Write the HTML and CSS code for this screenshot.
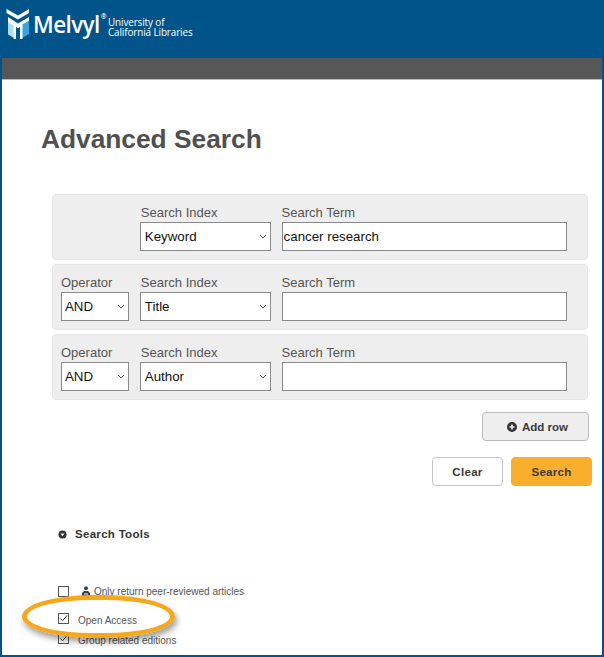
FILE: index.html
```html
<!DOCTYPE html>
<html lang="en">

<head>
    <meta charset="UTF-8">
    <title>Melvyl Advanced Search</title>
    <link rel="stylesheet" href="styles.css">
</head>

<body>
    <div class="page">
        <header class="top-bar">
            <svg class="logo-mark" viewBox="2 3 24 30" width="24" height="30">
                <path d="M2.500 3l11.500 6.500 11-6.500v4l-11 6.500-11.500-6.500z" fill="#fff"/>
                <path d="M4 12l8 4.500v16.500l-8-4.500z" fill="#a9def5"/>
                <path d="M16.500 16.500l8.500-5v16.500l-8.500 5z" fill="#35a7dc"/>
                <path d="M4 11l10 6.500 11-6.500v3.500l-6.500 4v14.500l-2.500 1v-13l-2 1.300-2-1.300v13l-2.500-1.500v-13l-5.500-3.500z" fill="#fff"/>
            </svg>
            <span class="logo-name">Melvyl<sup>®</sup></span>
            <span class="logo-sub">University of<br>California Libraries</span>
        </header>
        <div class="grey-bar"></div>

        <main class="content">
            <h1 class="title">Advanced Search</h1>

            <div class="rows">
                <div class="row">
                    <div class="field op-field"></div>
                    <div class="field index-field">
                        <label>Search Index</label>
                        <div class="select">Keyword<svg class="chev" viewBox="0 0 8 5" width="8" height="5"><path d="M1 1l3 3 3-3" /></svg></div>
                    </div>
                    <div class="field term-field">
                        <label>Search Term</label>
                        <div class="input">cancer research</div>
                    </div>
                </div>
                <div class="row">
                    <div class="field op-field">
                        <label>Operator</label>
                        <div class="select">AND<svg class="chev" viewBox="0 0 8 5" width="8" height="5"><path d="M1 1l3 3 3-3" /></svg></div>
                    </div>
                    <div class="field index-field">
                        <label>Search Index</label>
                        <div class="select">Title<svg class="chev" viewBox="0 0 8 5" width="8" height="5"><path d="M1 1l3 3 3-3" /></svg></div>
                    </div>
                    <div class="field term-field">
                        <label>Search Term</label>
                        <div class="input"></div>
                    </div>
                </div>
                <div class="row">
                    <div class="field op-field">
                        <label>Operator</label>
                        <div class="select">AND<svg class="chev" viewBox="0 0 8 5" width="8" height="5"><path d="M1 1l3 3 3-3" /></svg></div>
                    </div>
                    <div class="field index-field">
                        <label>Search Index</label>
                        <div class="select">Author<svg class="chev" viewBox="0 0 8 5" width="8" height="5"><path d="M1 1l3 3 3-3" /></svg></div>
                    </div>
                    <div class="field term-field">
                        <label>Search Term</label>
                        <div class="input"></div>
                    </div>
                </div>
            </div>

            <div class="add-line">
                <button class="btn add-btn">
                    <svg viewBox="0 0 12 12" width="10" height="10"><circle cx="6" cy="6" r="6" fill="#333"/><path d="M6 3v6M3 6h6" stroke="#eee" stroke-width="1.800"/></svg>
                    Add row
                </button>
            </div>
            <div class="action-line">
                <button class="btn clear-btn">Clear</button>
                <button class="btn search-btn">Search</button>
            </div>

            <div class="tools-head">
                <svg viewBox="0 0 10 10" width="9" height="9"><circle cx="5" cy="5" r="4.500" fill="#333"/><path d="M2.800 3.800h4.400L5 7z" fill="#fff"/></svg>
                Search Tools
            </div>

            <div class="checks">
                <div class="check">
                    <span class="box"></span>
                    <svg class="peer" viewBox="0 0 10 11" width="10" height="11"><circle cx="5" cy="2.200" r="2" fill="#444"/><path d="M1 11V7l2-2h4l2 2v4z" fill="#444"/><path d="M3 8h4" stroke="#fff" stroke-width="1"/></svg>
                    Only return peer-reviewed articles
                </div>
                <div class="check check-open">
                    <span class="box box-up"><svg viewBox="0 0 10 10" width="9" height="9"><path d="M1.500 5l2.500 2.500L9 1.500" fill="none" stroke="#333" stroke-width="1.100"/></svg></span>
                    <span>Open Access</span>
                </div>
                <div class="check check-group">
                    <span class="box box-up"><svg viewBox="0 0 10 10" width="9" height="9"><path d="M1.500 5l2.500 2.500L9 1.500" fill="none" stroke="#333" stroke-width="1.100"/></svg></span>
                    <span>Group related editions</span>
                </div>
            </div>
            <div class="highlight"></div>
        </main>
    </div>
</body>

</html>
```
FILE: styles.css
```css
html, body {
    margin: 0;
    height: 100%;
}

body {
    font-family: 'Liberation Sans', Arial, sans-serif;
    overflow: hidden;
    background: #fff;
}

.page {
    width: 604px;
    height: 657px;
    box-sizing: border-box;
    border: solid #00548a;
    border-width: 0 2px 2px 2px;
    overflow: hidden;
    position: relative;
}

.top-bar {
    height: 58px;
    margin: 0 -2px;
    background: #00548a;
    display: flex;
    align-items: flex-start;
    padding: 9px 0 0 6px;
    box-sizing: border-box;
    color: #fff;
}

.logo-mark {
    flex: none;
}

.logo-name {
    font-family: 'Open Sans', sans-serif;
    font-size: 22.500px;
    font-weight: 600;
    line-height: 30px;
    margin-left: 3px;
    margin-top: 1px;
    letter-spacing: -0.600px;
}

.logo-name sup {
    font-size: 7px;
    line-height: 0;
    vertical-align: 14px;
    margin-left: 1px;
}

.logo-sub {
    font-family: 'Open Sans', sans-serif;
    font-size: 9.900px;
    font-weight: 500;
    line-height: 10px;
    margin: 8px 0 0 2px;
    letter-spacing: -0.100px;
}

.grey-bar {
    height: 22px;
    background: #575757;
    border-bottom: 1px solid #bbb;
    box-sizing: border-box;
}

.content {
    padding: 44px 13px 0 39px;
}

.title {
    margin: 0 0 39px;
    font-size: 26.300px;
    line-height: 31px;
    font-weight: bold;
    color: #505050;
}

.rows {
    margin: 0 1px 0 11px;
    display: flex;
    flex-direction: column;
    gap: 4px;
}

.row {
    display: flex;
    gap: 11px;
    height: 66px;
    box-sizing: border-box;
    padding: 11px 20px 0 8px;
    background: #eee;
    border: 1px solid #e6e6e6;
    border-radius: 4px;
}

.field label {
    display: block;
    font-size: 13px;
    line-height: 14px;
    margin-bottom: 2px;
    color: #555;
}

.index-field label {
    margin-left: 1px;
}

.op-field {
    width: 68px;
}

.index-field {
    width: 131px;
}

.term-field {
    width: 286px;
}

.select, .input {
    height: 29px;
    box-sizing: border-box;
    border: 1px solid #8a8a8a;
    background: #fff;
    font-size: 13.300px;
    line-height: 27px;
    color: #111;
}

.select {
    padding: 0 3px;
    display: flex;
    align-items: center;
    justify-content: space-between;
}

.index-field .select {
    padding-left: 4px;
}

.input {
    padding-left: 1px;
}

.chev {
    fill: none;
    stroke: #555;
    stroke-width: 1;
}

.add-line {
    display: flex;
    justify-content: flex-end;
    margin-top: 12px;
}

.btn {
    font-family: 'Liberation Sans', Arial, sans-serif;
    font-size: 11.500px;
    font-weight: bold;
    letter-spacing: 0.300px;
    height: 29px;
    box-sizing: border-box;
    border-radius: 4px;
    color: #3a3a3a;
    padding: 0;
}

.add-btn {
    width: 107px;
    background: #eee;
    border: 1px solid #bbb;
    display: flex;
    align-items: center;
    justify-content: center;
    gap: 5px;
    padding-left: 4px;
    letter-spacing: 0;
}

.action-line {
    display: flex;
    justify-content: flex-end;
    gap: 8px;
    margin: 16px -3px 0 0;
}

.clear-btn {
    width: 71px;
    background: #fff;
    border: 1px solid #c4c4c4;
}

.search-btn {
    width: 81px;
    background: #f9ae2c;
    border: 1px solid #f9ae2c;
}

.tools-head {
    display: flex;
    align-items: center;
    gap: 8px;
    margin: 41px 0 0 17px;
    font-size: 11.500px;
    line-height: 14px;
    font-weight: bold;
    letter-spacing: 0.300px;
    color: #333;
}

.checks {
    margin: 44px 0 0 17px;
}

.check {
    display: flex;
    align-items: center;
    height: 13px;
    font-size: 10px;
    color: #555;
}

.check-open {
    margin-top: 16px;
}

.check-group {
    margin-top: 7px;
}

.box {
    width: 11px;
    height: 11px;
    box-sizing: border-box;
    border: 1px solid #555;
    flex: none;
    display: block;
    margin-right: 9px;
    background: #fff;
}

.box svg {
    display: block;
}

.box-up {
    margin-bottom: 5px;
}

.peer {
    margin: 0 3px;
}

.highlight {
    position: absolute;
    left: 20px;
    top: 595px;
    width: 143px;
    height: 33px;
    border: 5px solid #f5a81c;
    border-radius: 46% / 50%;
    box-shadow: 2px 4px 6px rgba(0, 0, 0, 0.4);
}
```
